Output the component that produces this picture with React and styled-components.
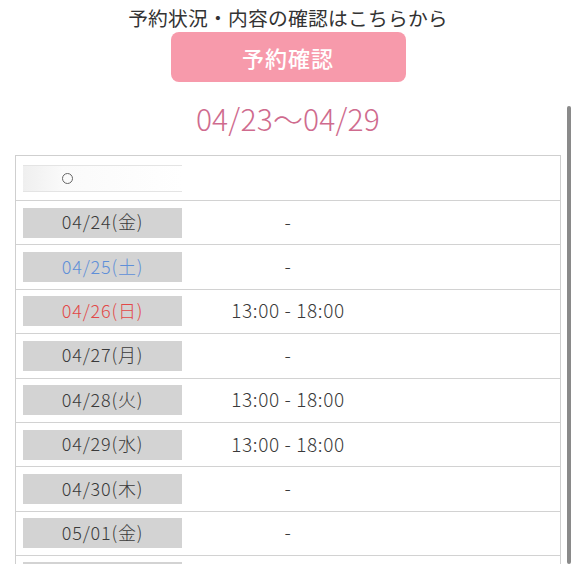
import React from 'react';
import styled, { createGlobalStyle } from 'styled-components';

const GlobalStyle = createGlobalStyle`
  html, body {
    margin: 0;
    padding: 0;
    background: #fff;
    overflow: hidden;
  }
  body {
    font-family: "Noto Sans CJK JP", "Noto Sans", sans-serif;
    color: #333;
  }
`;

const Page = styled.div`
  position: relative;
  width: 576px;
  height: 564px;
  overflow: hidden;
  display: flex;
  flex-direction: column;
  align-items: center;
  padding-top: 5px;
  box-sizing: border-box;

  & > * {
    flex-shrink: 0;
  }
`;

const Lead = styled.p`
  margin: 0;
  font-size: 19.8px;
  line-height: 26px;
  font-weight: 400;
  color: #333;
  letter-spacing: 0.2px;
`;

const ConfirmButton = styled.button`
  margin-top: 1px;
  width: 235px;
  height: 50px;
  border: none;
  border-radius: 8px;
  background: #f79aab;
  color: #fff;
  font-family: inherit;
  font-size: 22px;
  font-weight: 500;
  letter-spacing: 1px;
  cursor: pointer;
`;

const Period = styled.h2`
  margin: 17px 0 0;
  font-size: 30px;
  line-height: 38px;
  font-weight: 300;
  letter-spacing: 0.2px;
  color: #cf6b8e;
`;

const Table = styled.div`
  margin-top: 18px;
  width: 546px;
  align-self: flex-start;
  margin-left: 15px;
  border: 1px solid #cfcfcf;
  border-bottom: none;
  box-sizing: border-box;
`;

const Row = styled.div`
  display: grid;
  grid-template-columns: 159px 212px 1fr;
  align-items: ${p => (p.$cut ? 'start' : 'center')};
  height: ${p => (p.$head ? '44px' : '44.4px')};
  padding-left: 7px;
  padding-top: ${p => (p.$cut ? '6px' : '0')};
  box-sizing: border-box;
  border-top: ${p => (p.$head ? 'none' : '1px solid #d2d2d2')};
`;

const HeadCell = styled.div`
  height: 27px;
  display: flex;
  align-items: center;
  padding-left: 39px;
  box-sizing: border-box;
  background: linear-gradient(90deg, #efefef 0%, #fafafa 25%, #fff 100%);
  border-top: 1px solid #e4e4e4;
  border-bottom: 1px solid #e4e4e4;
`;

const Circle = styled.span`
  width: 9px;
  height: 9px;
  border: 1.5px solid #666;
  border-radius: 50%;
`;

const DateCell = styled.div`
  height: 30px;
  padding-bottom: 3px;
  box-sizing: border-box;
  background: #d3d3d3;
  display: flex;
  align-items: center;
  justify-content: center;
  font-size: 18px;
  font-weight: 300;
  letter-spacing: 0.8px;
  color: ${p => p.$color || '#3a3a3a'};
`;

const TimeCell = styled.div`
  text-align: center;
  font-size: 19px;
  font-weight: 300;
  letter-spacing: 0.6px;
  margin-top: -3px;
  color: #3a3a3a;
`;

const ScrollThumb = styled.div`
  position: absolute;
  right: 5px;
  top: 106px;
  bottom: 0;
  width: 4px;
  border-radius: 2px;
  background: #8a8a8a;
`;

const days = [
  { date: '04/24(金)', time: '-' },
  { date: '04/25(土)', time: '-', color: '#5f8fd8' },
  { date: '04/26(日)', time: '13:00 - 18:00', color: '#e24848' },
  { date: '04/27(月)', time: '-' },
  { date: '04/28(火)', time: '13:00 - 18:00' },
  { date: '04/29(水)', time: '13:00 - 18:00' },
  { date: '04/30(木)', time: '-' },
  { date: '05/01(金)', time: '-' },
];

export default function App() {
  return (
    <>
      <GlobalStyle />
      <Page>
        <Lead>予約状況・内容の確認はこちらから</Lead>
        <ConfirmButton>予約確認</ConfirmButton>
        <Period>04/23〜04/29</Period>
        <Table>
          <Row $head>
            <HeadCell>
              <Circle />
            </HeadCell>
          </Row>
          {days.map(d => (
            <Row key={d.date}>
              <DateCell $color={d.color}>{d.date}</DateCell>
              <TimeCell>{d.time}</TimeCell>
            </Row>
          ))}
          <Row $cut>
            <DateCell />
          </Row>
        </Table>
        <ScrollThumb />
      </Page>
    </>
  );
}
